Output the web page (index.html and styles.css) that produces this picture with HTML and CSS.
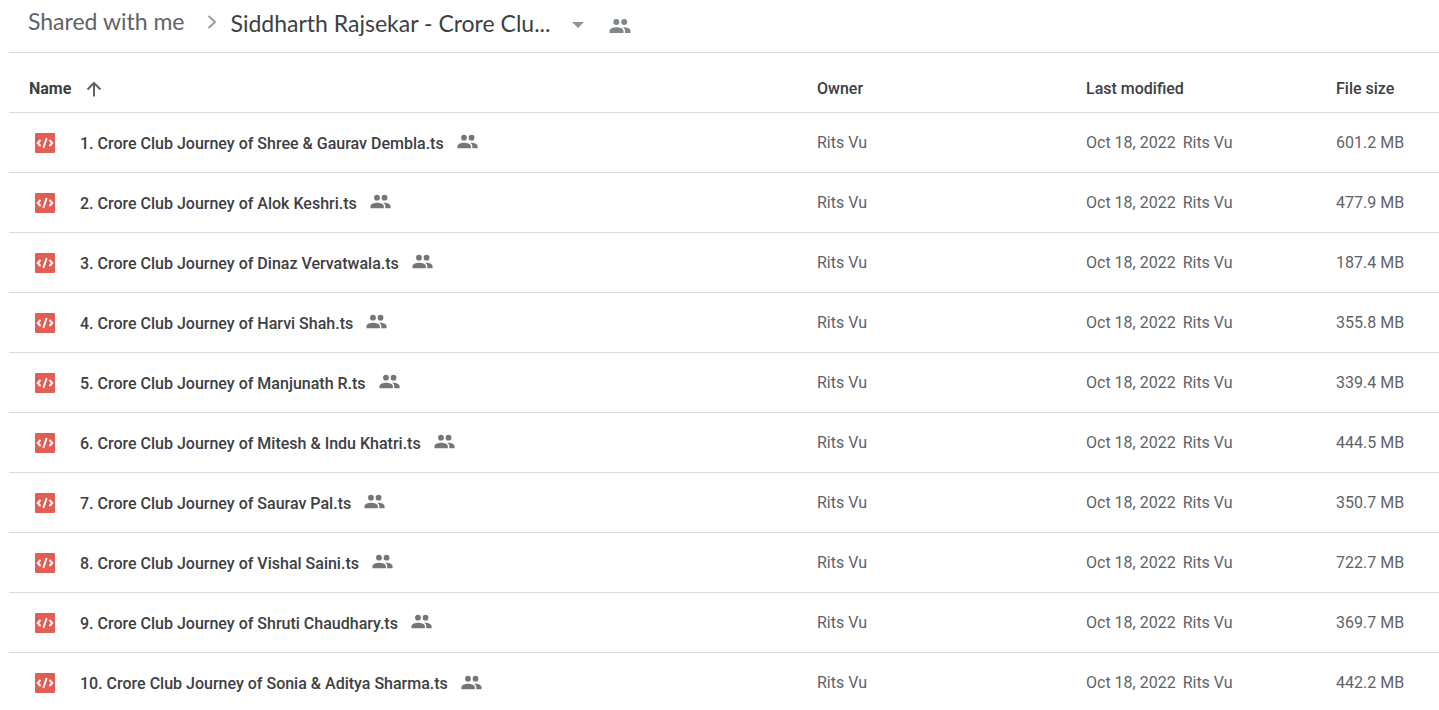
FILE: index.html
```html
<!DOCTYPE html>
<html lang="en">
<head>
    <meta charset="UTF-8">
    <meta name="viewport" content="width=device-width, initial-scale=1.0">
    <title>Shared with me</title>
    <link rel="stylesheet" href="styles.css">
</head>

<body>
<svg class="sprite" aria-hidden="true">
    <symbol id="people" viewBox="0 0 24 24">
        <circle cx="8.3" cy="8" r="3"/>
        <circle cx="16.2" cy="8" r="3"/>
        <path d="M8.500 13.200C6 13.200 1.500 14.300 1.500 16.800V19H15.500V16.800C15.500 14.300 11 13.200 8.500 13.200Z"/>
        <path d="M16 13.200C15.600 13.200 15.200 13.200 14.700 13.300C16.200 14.100 17 15.200 17 16.800V19H22.500V16.800C22.500 14.300 18.500 13.200 16 13.200Z"/>
    </symbol>
    <symbol id="code" viewBox="0 0 20 20">
        <rect width="20" height="20" rx="1" fill="#e25d53"/>
        <path d="M5.500 7L2.700 10L5.500 13M14.500 7L17.300 10L14.500 13M11.700 5L8.300 15" fill="none" stroke="#fff" stroke-width="1.900"/>
    </symbol>
</svg>

<nav class="breadcrumb" aria-label="Breadcrumb">
    <a href="#" class="crumb">Shared with me</a>
    <svg class="chevron" viewBox="0 0 10 16"><path d="M1.500 2L8 8L1.500 14"/></svg>
    <button type="button" class="current">
        Siddharth Rajsekar - Crore Clu...
        <svg class="caret" viewBox="0 0 12 6"><path d="M0 0H12L6 6Z"/></svg>
    </button>
    <button type="button" class="share" aria-label="Manage access">
        <svg class="people-large"><use href="#people"/></svg>
    </button>
</nav>

<table class="files">
    <thead>
    <tr>
        <th class="col-name">
            <button type="button" class="sort">
                Name
                <svg class="arrow" viewBox="0 0 16 16"><path d="M8 15.500V2M1.500 8.500L8 2L14.500 8.500"/></svg>
            </button>
        </th>
        <th class="col-owner">Owner</th>
        <th class="col-modified">Last modified</th>
        <th class="col-size">File size</th>
    </tr>
    </thead>
    <tbody>
    <tr>
        <td><div class="file"><svg class="code"><use href="#code"/></svg><span>1. Crore Club Journey of Shree &amp; Gaurav Dembla.ts</span><svg class="people"><use href="#people"/></svg></div></td>
        <td>Rits Vu</td>
        <td>Oct 18, 2022 <span class="editor">Rits Vu</span></td>
        <td>601.2 MB</td>
    </tr>
    <tr>
        <td><div class="file"><svg class="code"><use href="#code"/></svg><span>2. Crore Club Journey of Alok Keshri.ts</span><svg class="people"><use href="#people"/></svg></div></td>
        <td>Rits Vu</td>
        <td>Oct 18, 2022 <span class="editor">Rits Vu</span></td>
        <td>477.9 MB</td>
    </tr>
    <tr>
        <td><div class="file"><svg class="code"><use href="#code"/></svg><span>3. Crore Club Journey of Dinaz Vervatwala.ts</span><svg class="people"><use href="#people"/></svg></div></td>
        <td>Rits Vu</td>
        <td>Oct 18, 2022 <span class="editor">Rits Vu</span></td>
        <td>187.4 MB</td>
    </tr>
    <tr>
        <td><div class="file"><svg class="code"><use href="#code"/></svg><span>4. Crore Club Journey of Harvi Shah.ts</span><svg class="people"><use href="#people"/></svg></div></td>
        <td>Rits Vu</td>
        <td>Oct 18, 2022 <span class="editor">Rits Vu</span></td>
        <td>355.8 MB</td>
    </tr>
    <tr>
        <td><div class="file"><svg class="code"><use href="#code"/></svg><span>5. Crore Club Journey of Manjunath R.ts</span><svg class="people"><use href="#people"/></svg></div></td>
        <td>Rits Vu</td>
        <td>Oct 18, 2022 <span class="editor">Rits Vu</span></td>
        <td>339.4 MB</td>
    </tr>
    <tr>
        <td><div class="file"><svg class="code"><use href="#code"/></svg><span>6. Crore Club Journey of Mitesh &amp; Indu Khatri.ts</span><svg class="people"><use href="#people"/></svg></div></td>
        <td>Rits Vu</td>
        <td>Oct 18, 2022 <span class="editor">Rits Vu</span></td>
        <td>444.5 MB</td>
    </tr>
    <tr>
        <td><div class="file"><svg class="code"><use href="#code"/></svg><span>7. Crore Club Journey of Saurav Pal.ts</span><svg class="people"><use href="#people"/></svg></div></td>
        <td>Rits Vu</td>
        <td>Oct 18, 2022 <span class="editor">Rits Vu</span></td>
        <td>350.7 MB</td>
    </tr>
    <tr>
        <td><div class="file"><svg class="code"><use href="#code"/></svg><span>8. Crore Club Journey of Vishal Saini.ts</span><svg class="people"><use href="#people"/></svg></div></td>
        <td>Rits Vu</td>
        <td>Oct 18, 2022 <span class="editor">Rits Vu</span></td>
        <td>722.7 MB</td>
    </tr>
    <tr>
        <td><div class="file"><svg class="code"><use href="#code"/></svg><span>9. Crore Club Journey of Shruti Chaudhary.ts</span><svg class="people"><use href="#people"/></svg></div></td>
        <td>Rits Vu</td>
        <td>Oct 18, 2022 <span class="editor">Rits Vu</span></td>
        <td>369.7 MB</td>
    </tr>
    <tr>
        <td><div class="file"><svg class="code"><use href="#code"/></svg><span>10. Crore Club Journey of Sonia &amp; Aditya Sharma.ts</span><svg class="people"><use href="#people"/></svg></div></td>
        <td>Rits Vu</td>
        <td>Oct 18, 2022 <span class="editor">Rits Vu</span></td>
        <td>442.2 MB</td>
    </tr>
    </tbody>
</table>
</body>
</html>
```

FILE: styles.css
```css
* {
    margin: 0;
    padding: 0;
    box-sizing: border-box;
}

body {
    padding-left: 9px;
    background-color: #fff;
    color: #5f6368;
    font-family: Roboto, "Liberation Sans", sans-serif;
    font-size: 16px;
    line-height: 20px;
}

button {
    border: none;
    background: none;
    color: inherit;
    font: inherit;
    cursor: pointer;
}

svg {
    flex: none;
}

.sprite {
    display: none;
}

.breadcrumb {
    display: flex;
    align-items: center;
    height: 53px;
    padding-left: 19px;
    padding-bottom: 8px;
    border-bottom: 1px solid #dadce0;
    font-family: Lato, "Open Sans", sans-serif;
    font-size: 23px;
    line-height: 28px;
    white-space: nowrap;
}

.crumb {
    padding-bottom: 2px;
    color: #5f6368;
    text-decoration: none;
}

.chevron {
    width: 10px;
    height: 16px;
    margin: 0 14px 0 22px;
    fill: none;
    stroke: #9e9e9e;
    stroke-width: 2;
}

.current {
    display: flex;
    align-items: center;
    gap: 22px;
    padding-top: 2px;
    color: #3c4043;
}

.caret {
    width: 12px;
    height: 6px;
    margin-top: 4px;
    fill: #949494;
}

.share {
    display: flex;
    margin-left: 24px;
    padding-top: 8px;
}

.people-large {
    width: 24px;
    height: 24px;
    fill: #80868b;
}

.files {
    width: 100%;
    table-layout: fixed;
    border-collapse: separate;
    border-spacing: 0;
}

.files th,
.files td {
    height: 60px;
    border-bottom: 1px solid #dadce0;
    text-align: left;
    vertical-align: middle;
    white-space: nowrap;
}

.files th {
    padding-top: 12px;
    color: #3c4043;
    font-weight: 500;
}

.files tbody tr:last-child td {
    border-bottom: none;
}

.col-owner {
    width: 269px;
}

.col-modified {
    width: 250px;
}

.col-size {
    width: 103px;
}

.sort {
    display: flex;
    align-items: center;
    gap: 15px;
    padding-left: 20px;
    font-weight: 700;
}

.arrow {
    width: 16px;
    height: 16px;
    fill: none;
    stroke: #5f6368;
    stroke-width: 2;
}

.file {
    display: flex;
    align-items: center;
    padding-left: 26px;
    padding-top: 2px;
    color: #3c4043;
    font-weight: 500;
}

.code {
    width: 20px;
    height: 20px;
    margin: 0 25px 2px 0;
}

.people {
    width: 23px;
    height: 23px;
    margin: 0 0 4px 12px;
    fill: #757575;
}

.editor {
    margin-left: 3px;
}
```
